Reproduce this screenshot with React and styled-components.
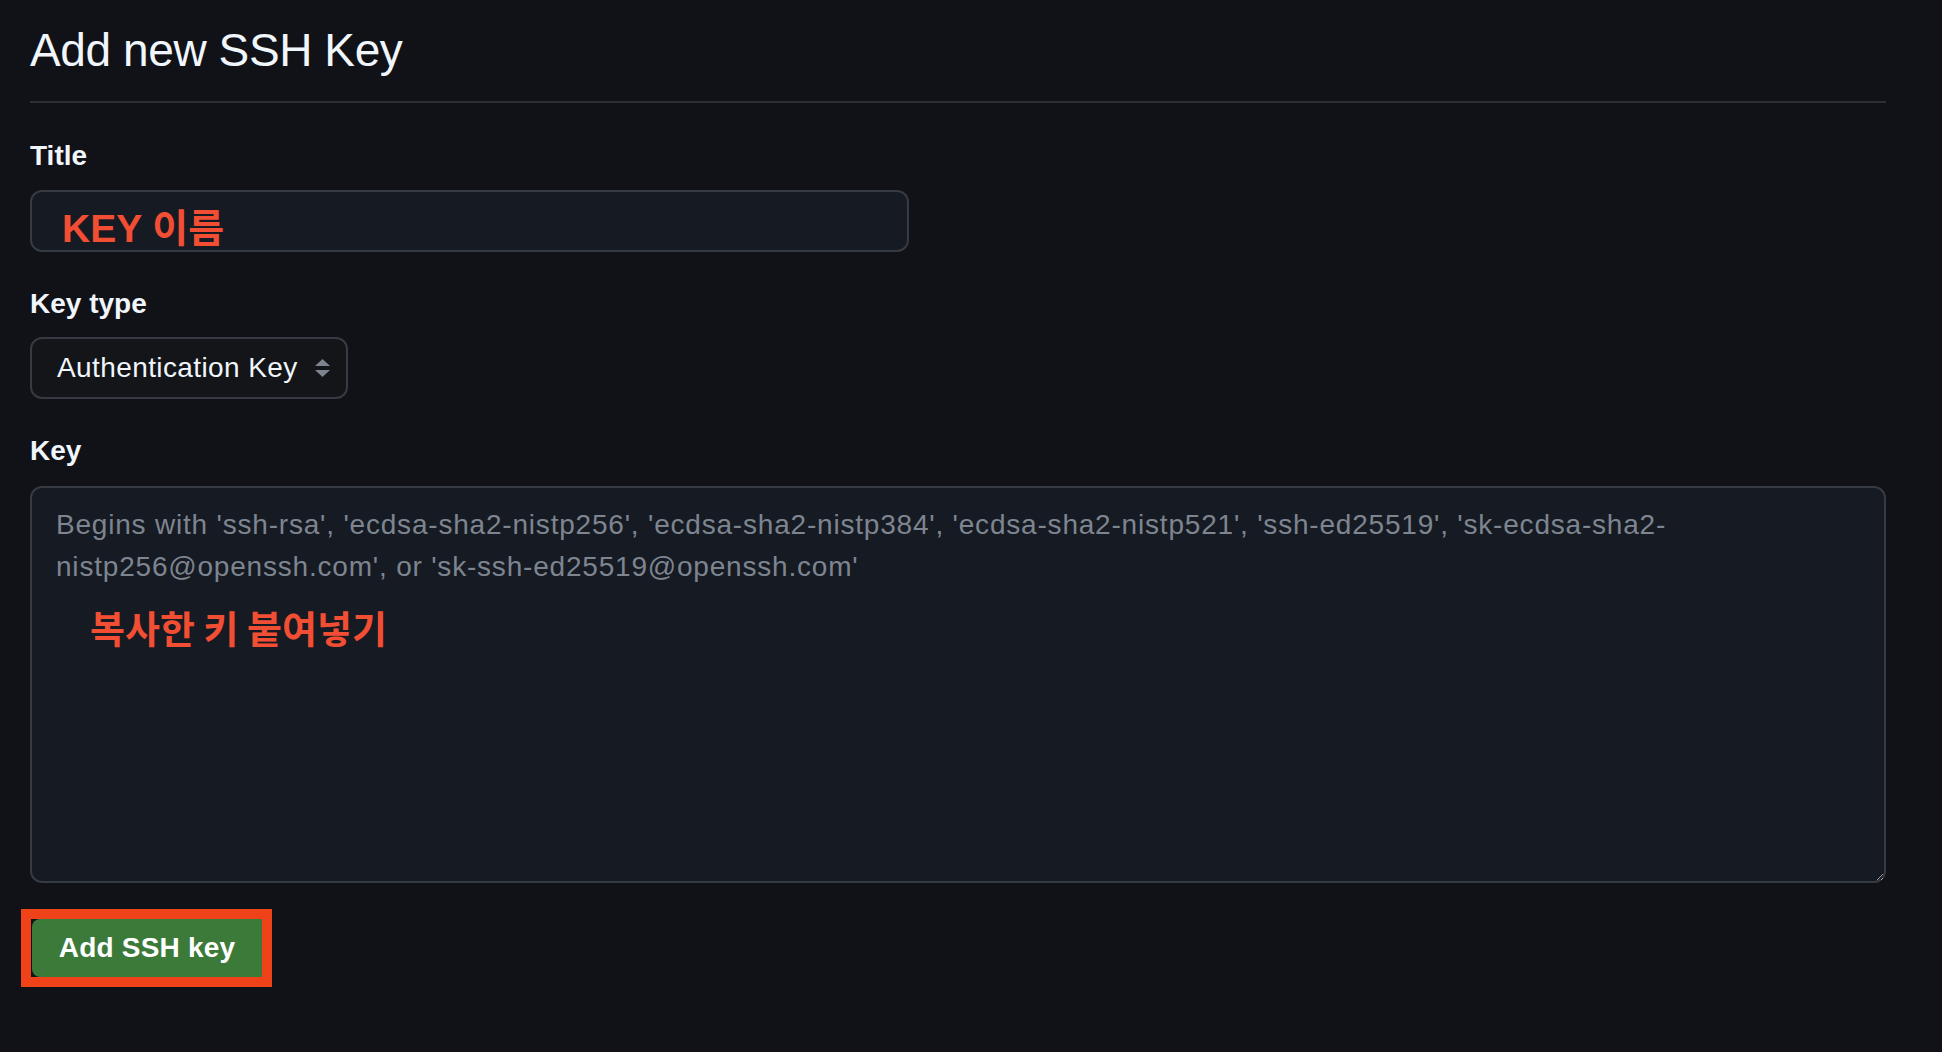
import React from 'react';
import styled, { createGlobalStyle } from 'styled-components';

const GlobalStyle = createGlobalStyle`
  html, body {
    margin: 0;
    padding: 0;
    background: #111217;
    color-scheme: dark;
  }
  #root {
    min-height: 100vh;
  }
`;

const Page = styled.main`
  padding: 27px 56px 40px 30px;
  font-family: "Liberation Sans", Arial, sans-serif;
  color: #f0f6fc;
`;

const Heading = styled.h2`
  margin: 0;
  padding-bottom: 28px;
  border-bottom: 2px solid #2a2f36;
  font-size: 46px;
  font-weight: 400;
  line-height: 1;
  letter-spacing: -0.4px;
  color: #f0f6fc;
`;

const Form = styled.form`
  display: flex;
  flex-direction: column;
  align-items: flex-start;
`;

const Label = styled.label`
  display: block;
  margin-top: 38px;
  font-size: 28px;
  font-weight: 700;
  line-height: 1;
  color: #f0f6fc;

  &:first-child {
    margin-top: 39px;
  }
`;

const TextInput = styled.input`
  box-sizing: border-box;
  width: 879px;
  height: 62px;
  margin-top: 20px;
  padding: 8px 24px 0 30px;
  border: 2px solid #363b43;
  border-radius: 12px;
  background: #161a22;
  color: #f24e34;
  font-family: "Liberation Sans", "Noto Sans CJK KR", sans-serif;
  font-size: 39px;
  font-weight: 700;
  outline: none;
`;

const SelectBox = styled.div`
  box-sizing: border-box;
  display: flex;
  align-items: center;
  width: 318px;
  height: 62px;
  margin-top: 19px;
  padding: 0 16px 0 25px;
  border: 2px solid #363b43;
  border-radius: 12px;
  background: #131519;
  font-size: 28px;
  line-height: 1;
  letter-spacing: 0.4px;
  color: #f0f6fc;

  & svg {
    margin-left: auto;
    flex-shrink: 0;
  }
`;

const KeyArea = styled.div`
  position: relative;
  width: 100%;
  margin-top: 21px;
`;

const TextArea = styled.textarea`
  box-sizing: border-box;
  display: block;
  width: 100%;
  height: 397px;
  padding: 16px 24px;
  border: 2px solid #363b43;
  border-radius: 12px;
  background: #161a22;
  color: #f0f6fc;
  font-family: "Liberation Sans", Arial, sans-serif;
  font-size: 28px;
  line-height: 42px;
  letter-spacing: 0.8px;
  resize: vertical;
  outline: none;

  &::placeholder {
    color: #7d8590;
  }
`;

const Note = styled.span`
  position: absolute;
  left: 60px;
  top: 122px;
  font-family: "Noto Sans CJK KR", sans-serif;
  font-size: 38px;
  font-weight: 700;
  line-height: 1;
  color: #f24e34;
  pointer-events: none;
`;

const Highlight = styled.div`
  display: inline-flex;
  margin-top: 26px;
  margin-left: -9px;
  border: 10px solid #ef4218;
  background: #111217;
`;

const SubmitButton = styled.button`
  width: 230px;
  height: 58px;
  margin-left: 1px;
  border: none;
  border-radius: 8px 0 0 8px;
  background: #3c7a3a;
  color: #ffffff;
  font-family: "Liberation Sans", Arial, sans-serif;
  font-size: 28px;
  font-weight: 700;
  letter-spacing: 0.2px;
  cursor: pointer;
`;

const SortArrows = () => (
  <svg width="15" height="18" viewBox="0 0 15 18" aria-hidden="true">
    <polygon points="7.5,0 15,7 0,7" fill="#7d8590" />
    <polygon points="0,11 15,11 7.5,18" fill="#7d8590" />
  </svg>
);

const placeholder =
  "Begins with 'ssh-rsa', 'ecdsa-sha2-nistp256', 'ecdsa-sha2-nistp384', 'ecdsa-sha2-nistp521', 'ssh-ed25519', 'sk-ecdsa-sha2-nistp256@openssh.com', or 'sk-ssh-ed25519@openssh.com'";

const App = () => {
  return (
    <Page>
      <GlobalStyle />
      <Heading>Add new SSH Key</Heading>
      <Form onSubmit={e => e.preventDefault()}>
        <Label htmlFor="ssh-title">Title</Label>
        <TextInput id="ssh-title" defaultValue="KEY 이름" readOnly />

        <Label>Key type</Label>
        <SelectBox>
          <span>Authentication Key</span>
          <SortArrows />
        </SelectBox>

        <Label htmlFor="ssh-key">Key</Label>
        <KeyArea>
          <TextArea id="ssh-key" placeholder={placeholder} />
          <Note>복사한 키 붙여넣기</Note>
        </KeyArea>

        <Highlight>
          <SubmitButton type="submit">Add SSH key</SubmitButton>
        </Highlight>
      </Form>
    </Page>
  );
};

export default App;
